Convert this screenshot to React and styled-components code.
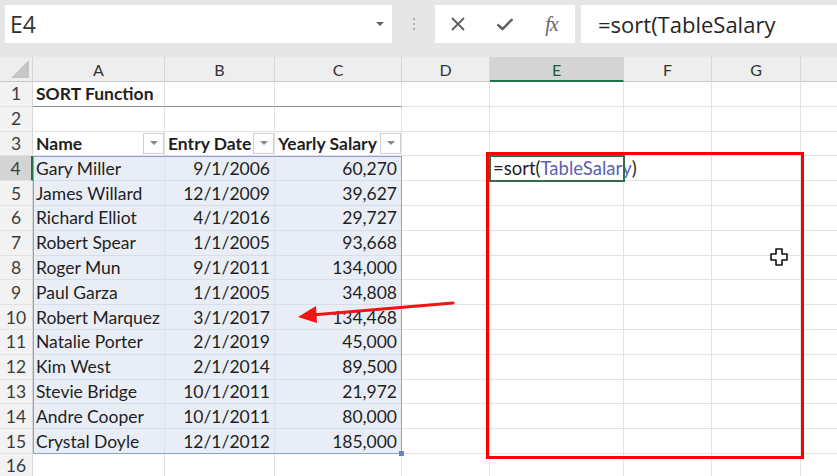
import React from 'react';
import styled, { createGlobalStyle } from 'styled-components';

const GlobalStyle = createGlobalStyle`
  html, body {
    margin: 0;
    padding: 0;
    background: #ffffff;
    overflow: hidden;
  }
  body {
    font-family: Lato, "Liberation Sans", sans-serif;
  }
`;

// H sits past the right edge of the window, so its label is left blank
const COLS = ['A', 'B', 'C', 'D', 'E', 'F', 'G', 'H'];
const SHOWN = ['A', 'B', 'C', 'D', 'E', 'F', 'G'];

const DATA = {
  1: ['SORT Function', '', ''],
  3: ['Name', 'Entry Date', 'Yearly Salary'],
  4: ['Gary Miller', '9/1/2006', '60,270'],
  5: ['James Willard', '12/1/2009', '39,627'],
  6: ['Richard Elliot', '4/1/2016', '29,727'],
  7: ['Robert Spear', '1/1/2005', '93,668'],
  8: ['Roger Mun', '9/1/2011', '134,000'],
  9: ['Paul Garza', '1/1/2005', '34,808'],
  10: ['Robert Marquez', '3/1/2017', '134,468'],
  11: ['Natalie Porter', '2/1/2019', '45,000'],
  12: ['Kim West', '2/1/2014', '89,500'],
  13: ['Stevie Bridge', '10/1/2011', '21,972'],
  14: ['Andre Cooper', '10/1/2011', '80,000'],
  15: ['Crystal Doyle', '12/1/2012', '185,000'],
};

const Page = styled.div`
  width: 837px;
  height: 476px;
  display: flex;
  flex-direction: column;
  background: #ffffff;
  overflow: hidden;
`;

const Toolbar = styled.div`
  height: 57px;
  box-sizing: border-box;
  padding: 5px 0 0 5px;
  display: flex;
  align-items: flex-start;
  background: #e6e6e6;
  flex-shrink: 0;
`;

const NameBox = styled.div`
  width: 387px;
  height: 38px;
  box-sizing: border-box;
  background: #ffffff;
  display: flex;
  align-items: center;
  justify-content: space-between;
  padding: 0 6px 0 5px;
  font-family: "Open Sans", "Noto Sans", sans-serif;
  font-size: 23px;
  color: #333333;
`;

const Caret = styled.span`
  width: 0;
  height: 0;
  border-left: 4px solid transparent;
  border-right: 4px solid transparent;
  border-top: 4px solid #666666;
  margin-right: 2px;
`;

const Grip = styled.div`
  width: 43px;
  height: 38px;
  display: flex;
  flex-direction: column;
  align-items: center;
  justify-content: center;
  gap: 3px;
`;

const Dot = styled.span`
  width: 2px;
  height: 2px;
  border-radius: 50%;
  background: #9a9a9a;
`;

const FxButtons = styled.div`
  width: 140px;
  height: 38px;
  background: #ffffff;
  display: grid;
  grid-template-columns: 46px 47px 47px;
  align-items: center;
  justify-items: center;
`;

const FxLabel = styled.span`
  font-family: "Liberation Serif", "DejaVu Serif", serif;
  font-style: italic;
  font-size: 20px;
  color: #666666;
  letter-spacing: -1px;
`;

const FormulaBox = styled.div`
  flex: 1;
  height: 38px;
  margin-left: 6px;
  background: #ffffff;
  display: flex;
  align-items: center;
  padding-left: 17px;
  font-family: "Open Sans", "Noto Sans", sans-serif;
  font-size: 22px;
  color: #262626;
  white-space: nowrap;
  overflow: hidden;
`;

const Sheet = styled.div`
  position: relative;
  display: grid;
  grid-template-columns: 33px 132px 110px 127px 88px 134px 88px 89px 88px;
  grid-template-rows: 25px repeat(16, 24.8px);
  font-size: 17.5px;
  color: #1f1f1f;
`;

const Slot = styled.div`
  grid-row: ${(p) => p.$r};
  grid-column: ${(p) => p.$c};
  box-sizing: border-box;
`;

const Corner = styled(Slot)`
  background: #eeeeee;
  border-right: 1px solid #d4d4d4;
  border-bottom: 1px solid #c8c8c8;
  position: relative;
  &::after {
    content: '';
    position: absolute;
    right: 3px;
    bottom: 3px;
    border-left: 18px solid transparent;
    border-bottom: 18px solid #c6c6c6;
  }
`;

const ColHead = styled(Slot)`
  background: ${(p) => (p.$active ? '#d4d4d4' : '#eeeeee')};
  border-right: 1px solid #d6d6d6;
  border-bottom: ${(p) => (p.$active ? '2px solid #217346' : '1px solid #c8c8c8')};
  display: flex;
  align-items: center;
  justify-content: center;
  font-size: 16px;
  color: ${(p) => (p.$active ? '#1d5e3b' : '#333333')};
  padding-top: 1px;
`;

const RowHead = styled(Slot)`
  background: ${(p) => (p.$active ? '#d4d4d4' : '#f2f2f2')};
  border-right: ${(p) => (p.$active ? '2px solid #217346' : '1px solid #d6d6d6')};
  border-bottom: 1px solid #e2e2e2;
  display: flex;
  align-items: center;
  justify-content: center;
  font-size: 17.5px;
  color: #3c3c3c;
`;

const Cell = styled(Slot)`
  position: relative;
  background: ${(p) => (p.$sel ? '#e9edf6' : '#ffffff')};
  border-right: 1px solid ${(p) => (p.$sel ? '#dde2ee' : '#e2e2e2')};
  border-bottom: ${(p) => (p.$rule ? '1px solid #8c8c8c' : `1px solid ${p.$sel ? '#d9dde8' : '#e2e2e2'}`)};
  display: flex;
  align-items: center;
  justify-content: ${(p) => (p.$right ? 'flex-end' : 'flex-start')};
  padding: 0 4px 0 3px;
  padding-right: ${(p) => (p.$filter ? '24px' : '4px')};
  font-weight: ${(p) => (p.$bold ? 700 : 400)};
  white-space: nowrap;
  overflow: visible;
`;

const FilterBtn = styled.span`
  position: absolute;
  right: 0;
  top: 1px;
  width: 21px;
  height: 21px;
  box-sizing: border-box;
  border: 1px solid #cfcfcf;
  background: #ffffff;
  display: flex;
  align-items: center;
  justify-content: center;
  &::after {
    content: '';
    border-left: 4px solid transparent;
    border-right: 4px solid transparent;
    border-top: 4px solid #8a8a8a;
  }
`;

const EditCell = styled(Cell)`
  outline: 2px solid #2f6f4e;
  outline-offset: -1px;
  z-index: 2;
  background: transparent;
  font-size: 18.5px;
`;

const RefName = styled.span`
  color: #5a62b0;
`;

const RefHighlight = styled.div`
  grid-column: 2 / 5;
  grid-row: 5 / 17;
  border: 1.5px solid #8b9fd3;
  box-sizing: border-box;
  pointer-events: none;
  position: relative;
  &::after {
    content: '';
    position: absolute;
    right: -3px;
    bottom: -3px;
    width: 5px;
    height: 5px;
    background: #6d80c0;
  }
`;

const RedBox = styled.div`
  grid-column: 6 / 9;
  grid-row: 5 / 17;
  margin: -4px -3px -5px -4px;
  border: 3px solid #ff0000;
  pointer-events: none;
  z-index: 3;
`;

const Overlay = styled.svg`
  position: absolute;
  left: 0;
  top: 0;
  pointer-events: none;
  z-index: 4;
`;

function CloseIcon() {
  return (
    <svg width="18" height="18" viewBox="0 0 18 18">
      <path d="M3 3 L15 15 M15 3 L3 15" stroke="#5f5f5f" strokeWidth="1.8" fill="none" />
    </svg>
  );
}

function CheckIcon() {
  return (
    <svg width="20" height="18" viewBox="0 0 20 18">
      <path d="M2.5 9.5 L7.5 14 L17.5 4" stroke="#5f5f5f" strokeWidth="2.4" fill="none" />
    </svg>
  );
}

export default function App() {
  const rows = Array.from({ length: 16 }, (_, i) => i + 1);

  return (
    <Page>
      <GlobalStyle />
      <Toolbar>
        <NameBox>
          E4
          <Caret />
        </NameBox>
        <Grip>
          <Dot />
          <Dot />
          <Dot />
        </Grip>
        <FxButtons>
          <CloseIcon />
          <CheckIcon />
          <FxLabel>fx</FxLabel>
        </FxButtons>
        <FormulaBox>=sort(TableSalary</FormulaBox>
      </Toolbar>

      <Sheet>
        <Corner $r={1} $c={1} />
        {COLS.map((c, ci) => (
          <ColHead key={c} $r={1} $c={ci + 2} $active={c === 'E'}>
            {SHOWN.includes(c) ? c : ''}
          </ColHead>
        ))}

        {rows.map((r) => {
          const vals = DATA[r] || ['', '', ''];
          const inTable = r >= 4 && r <= 15;
          const gr = r + 1;
          return (
            <React.Fragment key={r}>
              <RowHead $r={gr} $c={1} $active={r === 4}>
                {r}
              </RowHead>
              {COLS.map((c, ci) => {
                const gc = ci + 2;
                if (ci < 3) {
                  return (
                    <Cell
                      key={c}
                      $r={gr}
                      $c={gc}
                      $sel={inTable}
                      $bold={r === 1 || r === 3}
                      $right={inTable && ci > 0}
                      $rule={r === 1}
                      $filter={r === 3}
                    >
                      {vals[ci]}
                      {r === 3 && <FilterBtn />}
                    </Cell>
                  );
                }
                if (c === 'E' && r === 4) {
                  return (
                    <EditCell key={c} $r={gr} $c={gc}>
                      =sort(<RefName>TableSalary</RefName>)
                    </EditCell>
                  );
                }
                return <Cell key={c} $r={gr} $c={gc} />;
              })}
            </React.Fragment>
          );
        })}

        <RefHighlight />
        <RedBox />

        <Overlay width="837" height="419" viewBox="0 57 837 419">
          <line x1="453" y1="303" x2="312" y2="315" stroke="#f01414" strokeWidth="3" strokeLinecap="round" />
          <path d="M298 317 L316 306 L317 323 Z" fill="#f01414" />
          <path
            d="M776 249 h6 v5 h5 v6 h-5 v5 h-6 v-5 h-5 v-6 h5 Z"
            fill="#ffffff"
            stroke="#111111"
            strokeWidth="1.6"
            strokeLinejoin="round"
          />
        </Overlay>
      </Sheet>
    </Page>
  );
}
